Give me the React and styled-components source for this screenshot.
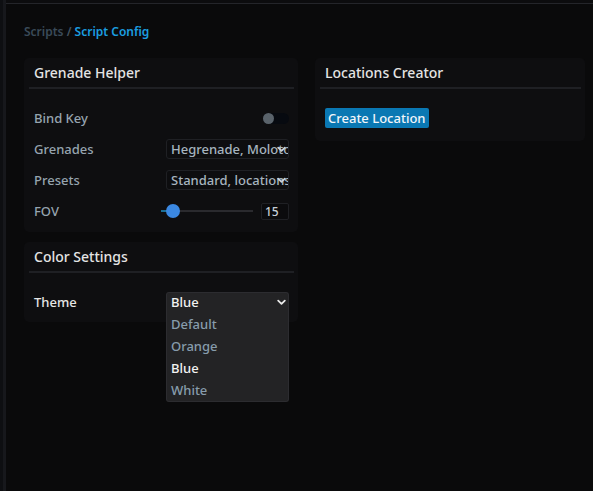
import React from "react";
import styled, { createGlobalStyle } from "styled-components";

const Global = createGlobalStyle`
  html, body { margin: 0; padding: 0; background: #0a0a0b; }
  body { font-family: "Noto Sans", "Open Sans", sans-serif; -webkit-font-smoothing: antialiased; }
  * { box-sizing: border-box; }
`;

const Shell = styled.div`
  display: flex;
  width: 593px;
  height: 491px;
  background: #0a0a0b;
  overflow: hidden;
`;

const Sidebar = styled.div`
  width: 6px;
  flex: none;
  background: #0e0f12;
  border-right: 3px solid #17181c;
`;

const Main = styled.div`
  flex: 1;
  display: flex;
  flex-direction: column;
`;

const TopBar = styled.div`
  height: 4px;
  flex: none;
  background: #0c0c0e;
  border-bottom: 1px solid #24252a;
`;

const Content = styled.div`
  padding: 14px 8px 0 18px;
  display: flex;
  flex-direction: column;
`;

const Crumbs = styled.div`
  font-size: 12px;
  font-weight: 600;
  height: 24px;
  line-height: 27px;
  color: #3a4b59;
  margin-bottom: 16px;
  span { color: #44525e; }
  b { color: #1b9ee0; font-weight: 600; }
`;

const Columns = styled.div`
  display: grid;
  grid-template-columns: 274px 270px;
  column-gap: 17px;
  align-items: start;
`;

const Stack = styled.div`
  display: flex;
  flex-direction: column;
  gap: 10px;
`;

const Panel = styled.section`
  background: #0e0e10;
  border-radius: 5px;
  padding: 0 4px ${p => p.$pb || 20}px 5px;
  position: relative;
`;

const PanelHead = styled.h3`
  margin: 0;
  height: 31px;
  padding: 0 0 0 5px;
  display: flex;
  align-items: center;
  font-size: 14px;
  font-weight: 500;
  color: #e4e4e4;
  border-bottom: 2px solid #1f2024;
`;

const Body = styled.div`
  padding: ${p => p.$pt || 17}px 5px 0 5px;
  display: flex;
  flex-direction: column;
  gap: ${p => p.$gap || 11}px;
`;

const Row = styled.div`
  display: flex;
  align-items: center;
  justify-content: space-between;
  height: 20px;
  position: relative;
`;

const Label = styled.span`
  font-size: 13px;
  font-weight: 500;
  color: ${p => (p.$bright ? "#e6e6e6" : "#96a4af")};
`;

const Toggle = styled.div`
  width: 26px;
  height: 11px;
  border-radius: 6px;
  background: #070a10;
  position: relative;
  &::before {
    content: "";
    position: absolute;
    left: 0;
    top: 0;
    width: 11px;
    height: 11px;
    border-radius: 50%;
    background: #5a636b;
  }
`;

const Select = styled.div`
  width: 123px;
  height: ${p => (p.$open ? 21 : 20)}px;
  border: 1px solid ${p => (p.$open ? "#2c2c30" : "#1f2024")};
  border-bottom-color: ${p => (p.$open ? "#232325" : "#1f2024")};
  border-radius: ${p => (p.$open ? "3px 3px 0 0" : "3px")};
  background: ${p => (p.$open ? "#232325" : "#0d0d0f")};
  display: flex;
  align-items: center;
  padding: 0 12px 0 4px;
  position: relative;
  font-size: 13px;
  font-weight: 500;
  color: ${p => (p.$open ? "#f2f2f2" : "#a6b4bf")};
  white-space: nowrap;
  overflow: hidden;
  svg {
    position: absolute;
    right: 2px;
    top: 6px;
  }
`;

const Menu = styled.div`
  position: absolute;
  right: 0;
  top: 20px;
  width: 123px;
  background: #232325;
  border: 1px solid #2c2c30;
  border-top: none;
  border-radius: 0 0 3px 3px;
  padding: 1px 0 0;
  z-index: 2;
`;

const Option = styled.div`
  height: 22px;
  display: flex;
  align-items: center;
  padding-left: 4px;
  font-size: 13px;
  font-weight: 500;
  color: ${p => (p.$active ? "#f2f2f2" : "#879cac")};
`;

const SliderWrap = styled.div`
  display: flex;
  align-items: center;
  gap: 8px;
`;

const Track = styled.div`
  width: 92px;
  height: 2px;
  background: #2a2a2e;
  position: relative;
`;

const Fill = styled.div`
  height: 2px;
  background: #1b6f98;
`;

const Thumb = styled.div`
  position: absolute;
  top: -6px;
  width: 14px;
  height: 14px;
  border-radius: 50%;
  background: #3b88e2;
`;

const NumBox = styled.div`
  width: 28px;
  height: 17px;
  border: 1px solid #1f2024;
  border-radius: 2px;
  background: #0b0b0d;
  font-size: 12px;
  font-weight: 500;
  color: #c6ced6;
  display: flex;
  align-items: center;
  padding-left: 3px;
`;

const Button = styled.button`
  align-self: flex-start;
  height: 20px;
  padding: 0 3px;
  border: none;
  border-radius: 2px;
  background: #0a78b3;
  color: #f2f6fa;
  font-family: inherit;
  font-size: 13px;
  font-weight: 500;
  cursor: pointer;
`;

const Chevron = ({ color = "#c8d0d8" }) => (
  <svg width="9" height="7" viewBox="0 0 9 7">
    <path d="M1.2 1.6 L4.5 4.8 L7.8 1.6" fill="none" stroke={color} strokeWidth="1.8" strokeLinecap="round" strokeLinejoin="round" />
  </svg>
);

export default function App() {
  const value = 15;
  const min = 0;
  const max = 120;
  const pct = (value - min) / (max - min);
  return (
    <>
      <Global />
      <Shell>
        <Sidebar />
        <Main>
          <TopBar />
          <Content>
            <Crumbs>
              Scripts <span>/</span> <b>Script Config</b>
            </Crumbs>
            <Columns>
              <Stack>
                <Panel $pb={11}>
                  <PanelHead>Grenade Helper</PanelHead>
                  <Body $pt={19}>
                    <Row>
                      <Label>Bind Key</Label>
                      <Toggle />
                    </Row>
                    <Row>
                      <Label>Grenades</Label>
                      <Select>
                        Hegrenade, Molotov
                        <Chevron />
                      </Select>
                    </Row>
                    <Row>
                      <Label>Presets</Label>
                      <Select>
                        Standard, locations
                        <Chevron />
                      </Select>
                    </Row>
                    <Row>
                      <Label>FOV</Label>
                      <SliderWrap>
                        <Track>
                          <Fill style={{ width: `${pct * 92}px` }} />
                          <Thumb style={{ left: `${pct * 92 - 7}px` }} />
                        </Track>
                        <NumBox>{value}</NumBox>
                      </SliderWrap>
                    </Row>
                  </Body>
                </Panel>
                <Panel $pb={10}>
                  <PanelHead>Color Settings</PanelHead>
                  <Body $pt={19}>
                    <Row>
                      <Label $bright>Theme</Label>
                      <Select $open>
                        Blue
                        <Chevron color="#e8e8e8" />
                      </Select>
                      <Menu>
                        <Option>Default</Option>
                        <Option>Orange</Option>
                        <Option $active>Blue</Option>
                        <Option>White</Option>
                      </Menu>
                    </Row>
                  </Body>
                </Panel>
              </Stack>
              <Panel $pb={13}>
                <PanelHead>Locations Creator</PanelHead>
                <Body $pt={19}>
                  <Button>Create Location</Button>
                </Body>
              </Panel>
            </Columns>
          </Content>
        </Main>
      </Shell>
    </>
  );
}
